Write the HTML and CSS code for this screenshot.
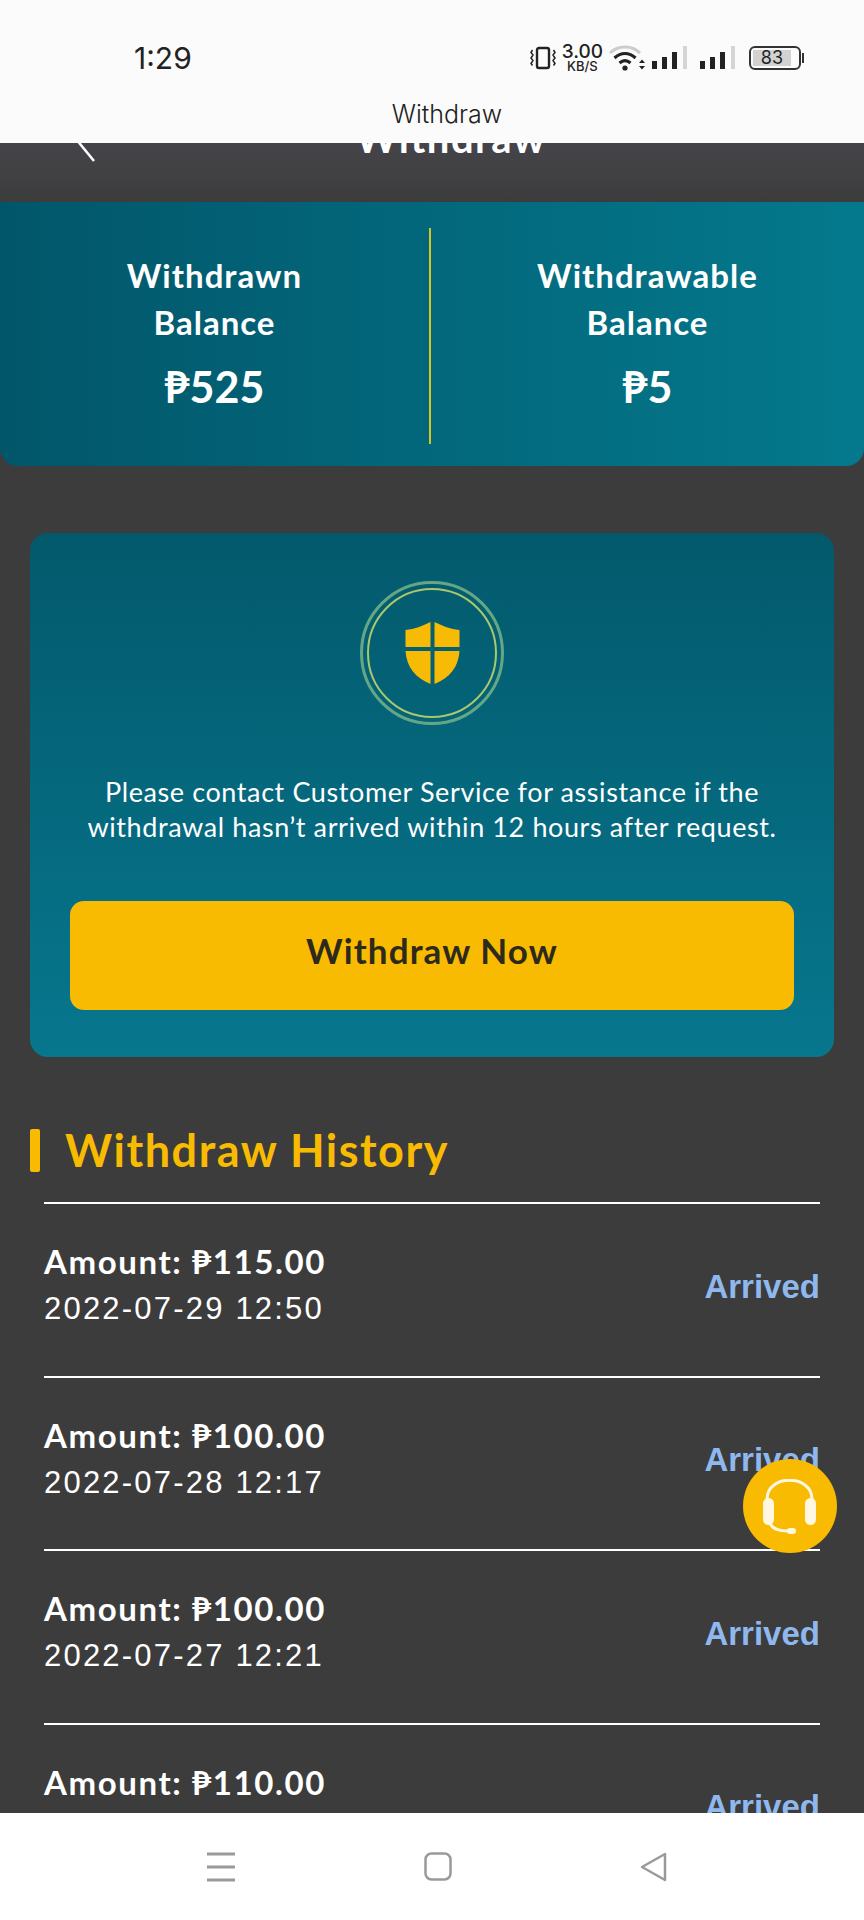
FILE: index.html
```html
<!DOCTYPE html>
<html lang="en">
<head>
    <meta charset="UTF-8">
    <title>Withdraw</title>
    <link rel="stylesheet" href="styles.css">
</head>
<body>
    <div class="phone">
        <div class="topbar">
            <div class="status">
                <span class="time">1:29</span>
                <div class="status-icons">
                    <svg class="ic-vibrate" width="28" height="26" viewBox="0 0 28 26" fill="none" stroke="#222" stroke-width="2">
                        <rect x="8" y="3" width="12" height="20" rx="2" stroke-width="2.4"/>
                        <path d="M3.5 5l-1.5 2.5 2 2.5-2 3 2 2.500-2 3 1.500 2M24.500 5l1.500 2.500-2 2.500 2 3-2 2.500 2 3-1.500 2" stroke-width="1.500"/>
                    </svg>
                    <div class="speed">
                        <span class="speed-num">3.00</span>
                        <span class="speed-unit">KB/S</span>
                    </div>
                    <svg class="ic-wifi" width="38" height="28" viewBox="0 0 38 28" fill="none">
                        <path d="M2 9C10 1 24 1 32 9" stroke="#ccc" stroke-width="3"/>
                        <path d="M6.500 14C13 8 21 8 27.500 14" stroke="#222" stroke-width="3.200"/>
                        <path d="M11.500 19C15 16 19 16 22.500 19" stroke="#222" stroke-width="3.200"/>
                        <circle cx="17" cy="24" r="2.600" fill="#222"/>
                        <path d="M31 19l3-3.500 3 3.500zM31 22h6l-3 3.500z" fill="#222"/>
                    </svg>
                    <svg class="ic-signal" width="36" height="26" viewBox="0 0 36 26">
                        <rect x="0" y="16" width="5" height="8" fill="#222"/>
                        <rect x="10" y="12" width="5" height="12" fill="#222"/>
                        <rect x="20" y="7" width="5" height="17" fill="#222"/>
                        <rect x="31" y="1" width="4" height="23" fill="#d4d4d4"/>
                    </svg>
                    <svg class="ic-signal" width="36" height="26" viewBox="0 0 36 26">
                        <rect x="0" y="16" width="5" height="8" fill="#222"/>
                        <rect x="10" y="12" width="5" height="12" fill="#222"/>
                        <rect x="20" y="7" width="5" height="17" fill="#222"/>
                        <rect x="31" y="1" width="4" height="23" fill="#d4d4d4"/>
                    </svg>
                    <div class="battery">
                        <div class="battery-body">
                            <span class="battery-level">83</span>
                        </div>
                        <span class="battery-cap"></span>
                    </div>
                </div>
            </div>
            <div class="app-name">Withdraw</div>
        </div>

        <main class="content">
            <header class="page-head">
                <svg class="back" width="30" height="30" viewBox="0 0 30 30" fill="none" stroke="#fff" stroke-width="2.500">
                    <path d="M24 29L6 7"/>
                </svg>
                <h1 class="page-title">Withdraw</h1>
            </header>

            <section class="balance">
                <div class="balance-col">
                    <div class="balance-label">Withdrawn<br>Balance</div>
                    <div class="balance-value">₱525</div>
                </div>
                <div class="balance-col">
                    <div class="balance-label">Withdrawable<br>Balance</div>
                    <div class="balance-value">₱5</div>
                </div>
            </section>

            <section class="notice">
                <div class="shield-ring">
                    <svg width="55" height="62" viewBox="0 0 54 62" fill="#f7bb05">
                        <path d="M25 0V25H0V8C9 7 17 4 25 0Z"/>
                        <path d="M29 0V25H54V8C45 7 37 4 29 0Z"/>
                        <path d="M0 29H25V62C10 56 1 45 0 29Z"/>
                        <path d="M54 29H29V62C44 56 53 45 54 29Z"/>
                    </svg>
                </div>
                <p class="notice-text">Please contact Customer Service for assistance if the<br>withdrawal hasn&#8217;t arrived within 12 hours after request.</p>
                <button class="btn-withdraw">Withdraw Now</button>
            </section>

            <h2 class="history-title">Withdraw History</h2>

            <ul class="history">
                <li class="row">
                    <div class="row-info">
                        <div class="amount">Amount: ₱115.00</div>
                        <div class="date">2022-07-29 12:50</div>
                    </div>
                    <span class="state">Arrived</span>
                </li>
                <li class="row">
                    <div class="row-info">
                        <div class="amount">Amount: ₱100.00</div>
                        <div class="date">2022-07-28 12:17</div>
                    </div>
                    <span class="state">Arrived</span>
                </li>
                <li class="row">
                    <div class="row-info">
                        <div class="amount">Amount: ₱100.00</div>
                        <div class="date">2022-07-27 12:21</div>
                    </div>
                    <span class="state">Arrived</span>
                </li>
                <li class="row">
                    <div class="row-info">
                        <div class="amount">Amount: ₱110.00</div>
                        <div class="date">2022-07-26 12:08</div>
                    </div>
                    <span class="state">Arrived</span>
                </li>
            </ul>

            <div class="support">
                <svg width="54" height="55" viewBox="0 0 54 55" fill="none">
                    <path d="M4 24V20C4 -5 49 -5 49 20V24" stroke="#fff7e0" stroke-width="3"/>
                    <rect x="0" y="19" width="11" height="27" rx="5.500" fill="#fff7e0"/>
                    <rect x="42" y="19" width="11" height="27" rx="5.500" fill="#fff7e0"/>
                    <path d="M7 44C9 50 16 52 26 52" stroke="#fff7e0" stroke-width="3"/>
                    <rect x="24" y="49" width="9" height="6" rx="3" fill="#fff7e0"/>
                </svg>
            </div>
        </main>

        <nav class="navbar">
            <svg width="28" height="30" viewBox="0 0 28 30" stroke="#9a9a9a" stroke-width="3">
                <path d="M0 2H28M0 15H28M0 28H28"/>
            </svg>
            <svg width="28" height="29" viewBox="0 0 28 29" fill="none" stroke="#9a9a9a" stroke-width="2.500">
                <rect x="1.500" y="1.500" width="25" height="26" rx="6"/>
            </svg>
            <svg width="27" height="30" viewBox="0 0 27 30" fill="none" stroke="#9a9a9a" stroke-width="2.500" stroke-linejoin="round">
                <path d="M25 2V28L2 15Z"/>
            </svg>
        </nav>
    </div>
</body>
</html>
```

FILE: styles.css
```css
* {
    box-sizing: border-box;
}
body {
    margin: 0;
    background-color: #3c3c3c;
    font-family: "Lato", "Liberation Sans", sans-serif;
}
.phone {
    display: flex;
    flex-direction: column;
    position: relative;
    width: 864px;
    height: 1920px;
    overflow: hidden;
}

/* status bar + app name */
.topbar {
    height: 143px;
    flex: none;
    background-color: #fbfbfb;
    color: #222;
    font-family: "Inter", "Liberation Sans", sans-serif;
}
.status {
    display: flex;
    align-items: center;
    height: 50px;
    padding: 33px 60px 0 134px;
    box-sizing: content-box;
}
.time {
    font-size: 30px;
    font-weight: 400;
}
.status-icons {
    display: flex;
    align-items: center;
    margin-left: auto;
}
.speed {
    display: flex;
    flex-direction: column;
    align-items: center;
    margin: 0 5px 0 5px;
    line-height: 1;
}
.speed-num {
    font-size: 19px;
    font-weight: 500;
    line-height: 17px;
}
.speed-unit {
    font-size: 13px;
    font-weight: 500;
    line-height: 13px;
}
.ic-signal {
    margin-left: 6px;
}
.ic-signal + .ic-signal {
    margin-left: 12px;
}
.battery {
    display: flex;
    align-items: center;
    margin-left: 13px;
}
.battery-body {
    width: 52px;
    height: 24px;
    padding: 2px;
    border: 2px solid #333;
    border-radius: 6px;
}
.battery-level {
    display: block;
    width: 38px;
    height: 16px;
    background-color: #d2d2d2;
    font-size: 18px;
    line-height: 16px;
    text-align: center;
}
.battery-cap {
    width: 2px;
    height: 10px;
    margin-left: 1px;
    background-color: #333;
}
.app-name {
    margin-top: 16px;
    padding-left: 30px;
    font-size: 25px;
    font-weight: 300;
    text-align: center;
    line-height: 30px;
}

/* main page */
.content {
    flex: 1;
    min-height: 0;
    overflow: hidden;
    position: relative;
}
.page-head {
    display: flex;
    justify-content: center;
    height: 59px;
    padding-left: 38px;
    overflow: hidden;
    background: linear-gradient(#45444a, #3d3c3c);
    position: relative;
}
.back {
    position: absolute;
    left: 70px;
    top: -11px;
}
.page-title {
    margin: -27px 0 0;
    color: #fff;
    font-size: 40px;
    line-height: 44px;
    font-weight: 700;
    letter-spacing: 1.5px;
}
.balance {
    display: flex;
    align-items: center;
    height: 264px;
    padding-top: 4px;
    border-radius: 0 0 18px 18px;
    background: linear-gradient(90deg, #02566a, #04798d);
    color: #fff;
    text-align: center;
}
.balance-col {
    flex: 1;
    height: 216px;
    padding-top: 24px;
}
.balance-col:first-child {
    flex: 0 0 431px;
    border-right: 2px solid #d7c521;
}
.balance-label {
    font-size: 33px;
    font-weight: 700;
    line-height: 47px;
    letter-spacing: 1px;
}
.balance-value {
    margin-top: 19px;
    font-size: 43px;
    font-weight: 700;
    line-height: 44px;
}
.notice {
    display: flex;
    flex-direction: column;
    align-items: center;
    height: 524px;
    margin: 67px 30px 0;
    padding-top: 48px;
    border-radius: 18px;
    background: linear-gradient(#03596c, #07778e);
    color: #fff;
}
.shield-ring {
    display: flex;
    align-items: center;
    justify-content: center;
    width: 144px;
    height: 144px;
    border-radius: 50%;
    border: 3px solid #64a786;
    position: relative;
}
.shield-ring::after {
    content: "";
    position: absolute;
    inset: 4px;
    border: 2.500px solid #a9c86c;
    border-radius: 50%;
}
.notice-text {
    margin: 49px 0 0;
    font-size: 27px;
    font-weight: 400;
    line-height: 35px;
    letter-spacing: 0.6px;
    text-align: center;
    white-space: nowrap;
}
.btn-withdraw {
    width: 724px;
    height: 109px;
    margin-top: 57px;
    padding-bottom: 12px;
    border: 0;
    border-radius: 14px;
    background-color: #f8bb02;
    color: #2d2a1c;
    font-family: inherit;
    font-size: 35px;
    font-weight: 700;
    letter-spacing: 1.1px;
}
.history-title {
    display: flex;
    align-items: center;
    margin: 63px 0 0 30px;
    height: 60px;
    color: #f8bb02;
    font-size: 45px;
    font-weight: 700;
    letter-spacing: 1.5px;
}
.history-title::before {
    content: "";
    width: 10px;
    height: 43px;
    margin-right: 25px;
    border-radius: 2px;
    background-color: #f8bb02;
}
.history {
    margin: 22px 0 0;
    padding: 0 44px;
    list-style: none;
}
.row {
    display: flex;
    justify-content: space-between;
    align-items: center;
    height: 173.500px;
    padding-bottom: 6px;
    border-top: 2px solid #fff;
    color: #fff;
}
.row-info {
    margin-bottom: 2px;
}
.amount {
    font-size: 33px;
    font-weight: 700;
    line-height: 47px;
    letter-spacing: 1.6px;
}
.date {
    font-family: "Liberation Sans", sans-serif;
    font-size: 31px;
    line-height: 48px;
    letter-spacing: 2.2px;
}
.state {
    color: #8fb8ee;
    font-family: "Liberation Sans", sans-serif;
    font-size: 33px;
    font-weight: 700;
}
.support {
    display: flex;
    align-items: center;
    justify-content: center;
    position: absolute;
    left: 743px;
    top: 1316px;
    width: 94px;
    height: 94px;
    border-radius: 50%;
    background-color: #f8bb02;
}
.navbar {
    display: flex;
    align-items: center;
    flex: none;
    justify-content: space-between;
    height: 107px;
    padding: 0 197px 0 207px;
    background-color: #fff;
}
```
